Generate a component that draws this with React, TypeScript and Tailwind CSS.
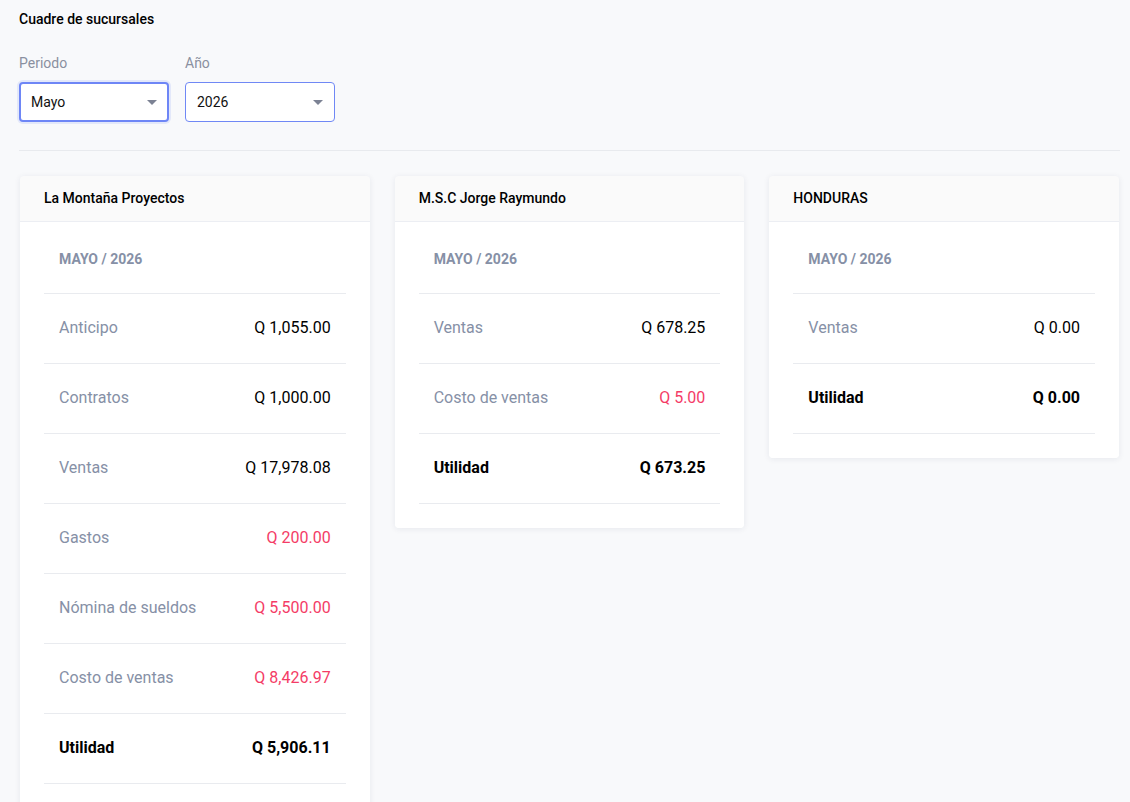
import React from 'react';

type Row = { label: string; value: string; tone?: 'neg' | 'total' };

interface Branch {
  name: string;
  rows: Row[];
}

const branches: Branch[] = [
  {
    name: 'La Montaña Proyectos',
    rows: [
      { label: 'Anticipo', value: 'Q 1,055.00' },
      { label: 'Contratos', value: 'Q 1,000.00' },
      { label: 'Ventas', value: 'Q 17,978.08' },
      { label: 'Gastos', value: 'Q 200.00', tone: 'neg' },
      { label: 'Nómina de sueldos', value: 'Q 5,500.00', tone: 'neg' },
      { label: 'Costo de ventas', value: 'Q 8,426.97', tone: 'neg' },
      { label: 'Utilidad', value: 'Q 5,906.11', tone: 'total' },
    ],
  },
  {
    name: 'M.S.C Jorge Raymundo',
    rows: [
      { label: 'Ventas', value: 'Q 678.25' },
      { label: 'Costo de ventas', value: 'Q 5.00', tone: 'neg' },
      { label: 'Utilidad', value: 'Q 673.25', tone: 'total' },
    ],
  },
  {
    name: 'HONDURAS',
    rows: [
      { label: 'Ventas', value: 'Q 0.00' },
      { label: 'Utilidad', value: 'Q 0.00', tone: 'total' },
    ],
  },
];

function Caret() {
  return (
    <svg width="10" height="5" viewBox="0 0 10 5" className="shrink-0">
      <path d="M0 0h10L5 5z" fill="#7c8294" />
    </svg>
  );
}

function SelectBox({ value, focused }: { value: string; focused?: boolean }) {
  return (
    <div
      className={
        focused
          ? 'flex h-10 w-[150px] items-center justify-between rounded-[4px] border-2 border-[#6e86f6] bg-white pl-[10px] pr-[10px] text-sm text-[#111] shadow-[0_0_0_2px_rgba(110,134,246,0.15)]'
          : 'flex h-10 w-[150px] items-center justify-between rounded-[4px] border border-[#7088f5] bg-white pl-[11px] pr-[11px] text-sm text-[#111]'
      }
    >
      <span>{value}</span>
      <Caret />
    </div>
  );
}

function BranchCard({ branch }: { branch: Branch }) {
  return (
    <div className="flex flex-col self-start rounded-[4px] bg-[#fafafa] shadow-[0_1px_6px_rgba(30,40,80,0.08)]">
      <div className="flex h-[46px] items-center border-b border-[#eceef3] px-6 pb-[2px] text-sm font-medium text-black">
        {branch.name}
      </div>
      <div className="rounded-b-[4px] bg-white px-6 pb-6 pt-[27px]">
        <div className="border-b border-[#e9ebef] px-[15px] pb-[24px] text-sm font-bold uppercase leading-5 text-[#8690a6]">
          Mayo / 2026
        </div>
        {branch.rows.map((r) => (
          <div
            key={r.label}
            className="flex h-[70px] items-center justify-between border-b border-[#e9ebef] pb-px pl-[15px] pr-[15px]"
          >
            <span
              className={
                r.tone === 'total'
                  ? 'text-[16px] font-bold text-black'
                  : 'text-[16px] text-[#8690a6]'
              }
            >
              {r.label}
            </span>
            <span
              className={
                r.tone === 'total'
                  ? 'text-[16px] font-bold text-black'
                  : r.tone === 'neg'
                  ? 'text-[16px] text-[#f43c66]'
                  : 'text-[16px] text-black'
              }
            >
              {r.value}
            </span>
          </div>
        ))}
      </div>
    </div>
  );
}

export default function App() {
  return (
    <div className="min-h-screen bg-[#f8f9fb] pl-[19px] pr-[10px] pt-[10px] font-['Roboto','Liberation_Sans',sans-serif]">
      <h1 className="text-sm font-medium leading-[18px] text-black">Cuadre de sucursales</h1>

      <div className="mt-[27px] flex gap-4">
        <div className="flex flex-col gap-[11px]">
          <label className="text-sm leading-4 text-[#8a90a0]">Periodo</label>
          <SelectBox value="Mayo" focused />
        </div>
        <div className="flex flex-col gap-[11px]">
          <label className="text-sm leading-4 text-[#8a90a0]">Año</label>
          <SelectBox value="2026" />
        </div>
      </div>

      <div className="mt-7 border-t border-[#e8eaee]" />

      <div className="mt-[25px] grid grid-cols-3 gap-[25px] pb-10 pl-px pr-px">
        {branches.map((b) => (
          <BranchCard key={b.name} branch={b} />
        ))}
      </div>
    </div>
  );
}
